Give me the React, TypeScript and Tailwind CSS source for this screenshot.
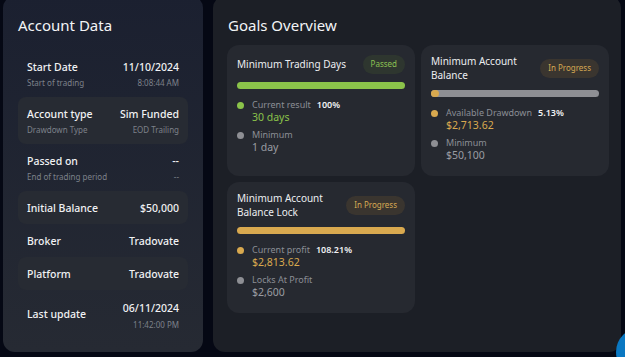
import React from 'react';

const font = { fontFamily: '"Noto Sans", "Liberation Sans", sans-serif' };

interface InfoRowProps {
  label: string;
  value: string;
  sub?: string;
  subValue?: string;
  shaded?: boolean;
}

const InfoRow = ({ label, value, sub, subValue, shaded }: InfoRowProps) => (
  <div
    className={`mx-[15px] px-[9px] rounded-lg flex flex-col justify-center ${sub ? 'h-[47px]' : 'h-[33px]'} ${shaded ? 'bg-[#272b33]' : ''}`}
  >
    <div className="flex justify-between items-center text-[10.5px] leading-[14px] text-[#f1f2f4] font-medium">
      <span>{label}</span>
      <span>{value}</span>
    </div>
    {sub && (
      <div className="flex justify-between items-center text-[8px] leading-[10px] text-[#7d818a] mt-[4px]">
        <span>{sub}</span>
        <span>{subValue}</span>
      </div>
    )}
  </div>
);

interface StatProps {
  dot: string;
  label: string;
  extra?: string;
  value: string;
  valueColor: string;
}

const Stat = ({ dot, label, extra, value, valueColor }: StatProps) => (
  <div className="flex gap-[8px]">
    <span className={`w-[7px] h-[7px] rounded-full mt-[4px] shrink-0 ${dot}`} />
    <div className="flex flex-col">
      <div className="flex items-center gap-[6px] text-[9px] leading-[13px]">
        <span className="text-[#8b8e95]">{label}</span>
        {extra && <span className="text-[#f1f2f4] font-semibold">{extra}</span>}
      </div>
      <span className={`text-[10.5px] leading-[13px] ${valueColor}`}>{value}</span>
    </div>
  </div>
);

interface GoalCardProps {
  title: React.ReactNode;
  badge: string;
  passed?: boolean;
  bar: React.ReactNode;
  children: React.ReactNode;
}

const GoalCard = ({ title, badge, passed, bar, children }: GoalCardProps) => (
  <div className="bg-[#262930] rounded-xl h-[131px] px-[10px] pt-[9px] flex flex-col">
    <div className="flex justify-between items-center min-h-[20px]">
      <div className="text-[10px] leading-[14px] text-[#eceef1]">{title}</div>
      <span
        className={`rounded-full px-[8px] h-[19px] flex items-center text-[8px] ${passed ? 'bg-[#2e362f] text-[#8cc152]' : 'bg-[#3a352f] text-[#d6a953]'}`}
      >
        {badge}
      </span>
    </div>
    <div className="mt-[8px] mb-[9px]">{bar}</div>
    <div className="flex flex-col gap-[4px]">{children}</div>
  </div>
);

export default function App() {
  return (
    <div style={font} className="w-[625px] h-[357px] bg-[#050814] relative overflow-hidden flex gap-[10px] px-[3px]">
      {/* Account Data */}
      <div className="w-[200px] h-[356px] -mt-[4px] rounded-xl bg-linear-to-b from-[#1b2030] to-[#262a33] flex flex-col">
        <div className="pl-[15px] pt-[19px] text-[15px] leading-[20px] text-[#f3f4f6]">Account Data</div>
        <div className="mt-[15px] flex flex-col">
          <InfoRow label="Start Date" value="11/10/2024" sub="Start of trading" subValue="8:08:44 AM" />
          <InfoRow label="Account type" value="Sim Funded" sub="Drawdown Type" subValue="EOD Trailing" shaded />
          <InfoRow label="Passed on" value="--" sub="End of trading period" subValue="--" />
          <InfoRow label="Initial Balance" value="$50,000" shaded />
          <InfoRow label="Broker" value="Tradovate" />
          <InfoRow label="Platform" value="Tradovate" shaded />
          <div className="mx-[15px] px-[9px] h-[50px] flex justify-between items-center">
            <span className="text-[10.5px] text-[#f1f2f4] font-medium">Last update</span>
            <div className="flex flex-col items-end">
              <span className="text-[10.5px] leading-[14px] text-[#f1f2f4] font-medium">06/11/2024</span>
              <span className="text-[8px] leading-[10px] text-[#7d818a] mt-[5px]">11:42:00 PM</span>
            </div>
          </div>
        </div>
      </div>

      {/* Goals Overview */}
      <div className="w-[408px] h-[356px] -mt-[4px] rounded-xl bg-[#1c1f26] px-[14px]">
        <div className="pl-[1px] pt-[19px] text-[15px] leading-[20px] text-[#f3f4f6]">Goals Overview</div>
        <div className="mt-[10px] grid grid-cols-2 gap-[6px] w-[382px]">
          <GoalCard
            title="Minimum Trading Days"
            badge="Passed"
            passed
            bar={<div className="h-[7px] rounded-full bg-[#8bc34a]" />}
          >
            <Stat dot="bg-[#8bc34a]" label="Current result" extra="100%" value="30 days" valueColor="text-[#8bc34a]" />
            <Stat dot="bg-[#8e8f94]" label="Minimum" value="1 day" valueColor="text-[#9a9ca2]" />
          </GoalCard>
          <GoalCard
            title={<>Minimum Account<br />Balance</>}
            badge="In Progress"
            bar={
              <div className="h-[7px] rounded-full bg-[#8e8f94]">
                <div className="h-[7px] w-[8px] rounded-full bg-[#d9a94f]" />
              </div>
            }
          >
            <Stat dot="bg-[#d9a94f]" label="Available Drawdown" extra="5.13%" value="$2,713.62" valueColor="text-[#d9a94f]" />
            <Stat dot="bg-[#8e8f94]" label="Minimum" value="$50,100" valueColor="text-[#9a9ca2]" />
          </GoalCard>
          <GoalCard
            title={<>Minimum Account<br />Balance Lock</>}
            badge="In Progress"
            bar={<div className="h-[7px] rounded-full bg-[#d9a94f]" />}
          >
            <Stat dot="bg-[#d9a94f]" label="Current profit" extra="108.21%" value="$2,813.62" valueColor="text-[#d9a94f]" />
            <Stat dot="bg-[#8e8f94]" label="Locks At Profit" value="$2,600" valueColor="text-[#9a9ca2]" />
          </GoalCard>
        </div>
      </div>

      {/* floating chat button */}
      <div className="absolute left-[616px] top-[328px] w-[48px] h-[48px] rounded-full bg-[#0a78c2]" />
    </div>
  );
}
